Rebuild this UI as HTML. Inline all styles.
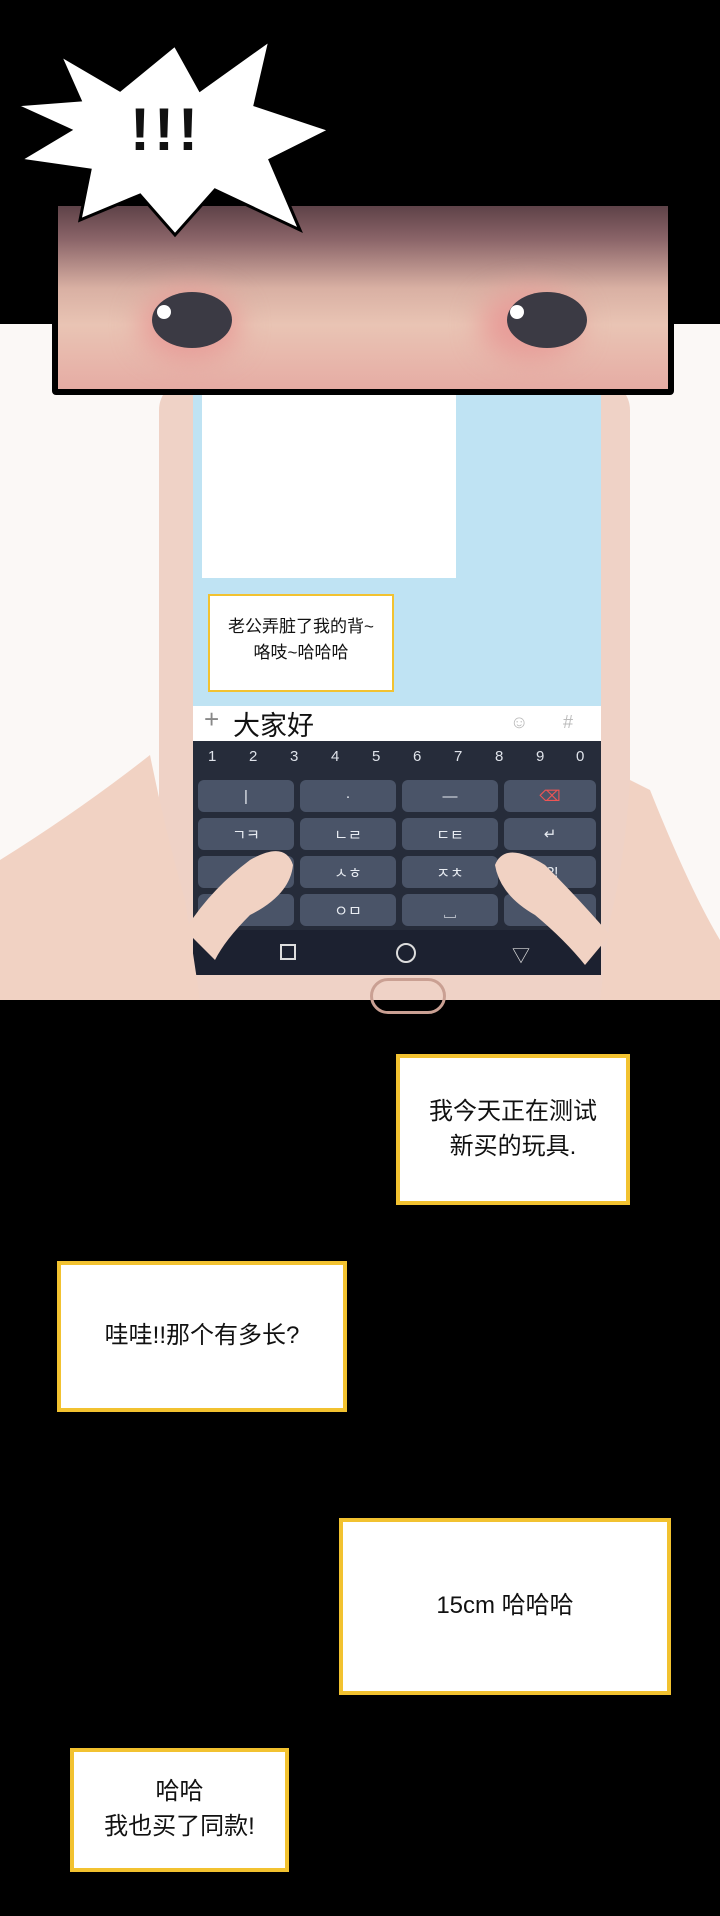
<!DOCTYPE html>
<html><head><meta charset="utf-8">
<style>
html,body{margin:0;padding:0;}
body{width:720px;height:1916px;background:#000;position:relative;overflow:hidden;font-family:"Liberation Sans","Noto Sans CJK SC",sans-serif;}
.a{position:absolute;}
.bub{position:absolute;background:#fff;border:4px solid #f2c230;box-sizing:border-box;display:flex;align-items:center;justify-content:center;text-align:center;color:#111;font-size:24px;line-height:1.45;}
.key{position:absolute;background:#4a5468;border-radius:6px;color:#e8ecf2;font-size:15px;display:flex;align-items:center;justify-content:center;}
.num{position:absolute;color:#dfe3ea;font-size:15px;}
</style></head><body>
<div class="a" style="left:0;top:324px;width:720px;height:672px;background:#fbf8f6;"></div>
<!-- phone -->
<div class="a" style="left:159px;top:380px;width:471px;height:620px;background:#efd2c6;border-radius:30px;"></div>
<div class="a" style="left:193px;top:390px;width:408px;height:585px;background:#bfe3f3;"></div>
<div class="a" style="left:202px;top:390px;width:254px;height:188px;background:#fff;"></div>
<div class="a" style="left:208px;top:594px;width:186px;height:98px;background:#fff;border:2px solid #f2c230;box-sizing:border-box;font-size:17px;text-align:center;line-height:1.5;padding-top:18px;color:#111;">老公弄脏了我的背~<br>咯吱~哈哈哈</div>
<div class="a" style="left:193px;top:706px;width:408px;height:35px;background:#fff;"></div>
<div class="a" style="left:204px;top:704px;font-size:26px;color:#888;">+</div>
<div class="a" style="left:233px;top:704px;font-size:27px;color:#111;">大家好</div>
<div class="a" style="left:510px;top:712px;font-size:18px;color:#bbb;">☺</div>
<div class="a" style="left:563px;top:712px;font-size:18px;color:#bbb;">#</div>
<div class="a" style="left:193px;top:741px;width:408px;height:234px;background:#262c3a;"></div>
<div class="num" style="left:208px;top:748px;">1</div><div class="num" style="left:249px;top:748px;">2</div><div class="num" style="left:290px;top:748px;">3</div><div class="num" style="left:331px;top:748px;">4</div><div class="num" style="left:372px;top:748px;">5</div><div class="num" style="left:413px;top:748px;">6</div><div class="num" style="left:454px;top:748px;">7</div><div class="num" style="left:495px;top:748px;">8</div><div class="num" style="left:536px;top:748px;">9</div><div class="num" style="left:576px;top:748px;">0</div>
<div class="key" style="left:198px;top:780px;width:96px;height:32px;">|</div>
<div class="key" style="left:300px;top:780px;width:96px;height:32px;">·</div>
<div class="key" style="left:402px;top:780px;width:96px;height:32px;">—</div>
<div class="key" style="left:504px;top:780px;width:92px;height:32px;color:#e55;">⌫</div>
<div class="key" style="left:198px;top:818px;width:96px;height:32px;">ㄱㅋ</div>
<div class="key" style="left:300px;top:818px;width:96px;height:32px;">ㄴㄹ</div>
<div class="key" style="left:402px;top:818px;width:96px;height:32px;">ㄷㅌ</div>
<div class="key" style="left:504px;top:818px;width:92px;height:32px;">↵</div>
<div class="key" style="left:198px;top:856px;width:96px;height:32px;"></div>
<div class="key" style="left:300px;top:856px;width:96px;height:32px;">ㅅㅎ</div>
<div class="key" style="left:402px;top:856px;width:96px;height:32px;">ㅈㅊ</div>
<div class="key" style="left:504px;top:856px;width:92px;height:32px;">.?!</div>
<div class="key" style="left:198px;top:894px;width:96px;height:32px;"></div>
<div class="key" style="left:300px;top:894px;width:96px;height:32px;">ㅇㅁ</div>
<div class="key" style="left:402px;top:894px;width:96px;height:32px;">␣</div>
<div class="key" style="left:504px;top:894px;width:92px;height:32px;"></div>
<div class="a" style="left:193px;top:930px;width:408px;height:45px;background:#1c2130;"></div>
<div class="a" style="left:280px;top:944px;width:16px;height:16px;border:2px solid #ddd;box-sizing:border-box;"></div>
<div class="a" style="left:396px;top:943px;width:20px;height:20px;border:2px solid #ddd;border-radius:50%;box-sizing:border-box;"></div>
<div class="a" style="left:512px;top:942px;color:#ddd;font-size:18px;">▽</div>
<div class="a" style="left:370px;top:978px;width:70px;height:30px;border:3px solid #caa093;border-radius:30px;"></div>
<!-- hands -->
<svg class="a" style="left:0;top:700px" width="720" height="300">
<path d="M0 300 L0 160 Q80 110 150 55 Q165 130 185 200 L200 300 Z" fill="#f1d2c3"/>
<path d="M185 230 Q210 190 250 160 Q285 140 293 165 Q290 195 250 215 Q225 240 215 260 Z" fill="#f1d2c3"/>
<path d="M720 300 L720 240 Q690 190 650 90 L630 80 Q625 160 610 220 L600 300 Z" fill="#f1d2c3"/>
<path d="M610 235 Q580 200 545 165 Q505 140 495 165 Q500 195 535 215 Q565 240 585 265 Z" fill="#f1d2c3"/>
</svg>
<!-- eyes panel -->
<div class="a" style="left:52px;top:200px;width:622px;height:195px;background:#000;border-radius:4px;"></div>
<div class="a" style="left:58px;top:206px;width:610px;height:183px;background:linear-gradient(#5e4248 0,#8a6468 18%,#d9b0a3 45%,#e9c4b4 65%,#e6aca4 100%);"></div>
<div class="a" style="left:140px;top:290px;width:100px;height:70px;background:#e79c98;border-radius:50%;filter:blur(14px);"></div>
<div class="a" style="left:480px;top:290px;width:100px;height:70px;background:#e79c98;border-radius:50%;filter:blur(14px);"></div>
<div class="a" style="left:152px;top:292px;width:80px;height:56px;background:#3b3a44;border-radius:50%;"></div>
<div class="a" style="left:507px;top:292px;width:80px;height:56px;background:#3b3a44;border-radius:50%;"></div>
<div class="a" style="left:157px;top:305px;width:14px;height:14px;background:#fff;border-radius:50%;"></div>
<div class="a" style="left:510px;top:305px;width:14px;height:14px;background:#fff;border-radius:50%;"></div>
<!-- burst -->
<svg class="a" style="left:0;top:20px" width="360" height="230">
<polygon points="60,35 120,70 175,25 200,70 270,20 255,85 330,110 270,140 300,210 215,170 175,215 140,175 80,200 90,150 20,140 70,110 15,85 80,80" fill="#fff" stroke="#000" stroke-width="3"/>
</svg>
<div class="a" style="left:130px;top:95px;font-size:60px;font-weight:bold;color:#111;letter-spacing:4px;">!!!</div>
<!-- bubbles -->
<div class="bub" style="left:396px;top:1054px;width:234px;height:151px;">我今天正在测试<br>新买的玩具.</div>
<div class="bub" style="left:57px;top:1261px;width:290px;height:151px;">哇哇!!那个有多长?</div>
<div class="bub" style="left:339px;top:1518px;width:332px;height:177px;">15cm 哈哈哈</div>
<div class="bub" style="left:70px;top:1748px;width:219px;height:124px;">哈哈<br>我也买了同款!</div>
</body></html>
